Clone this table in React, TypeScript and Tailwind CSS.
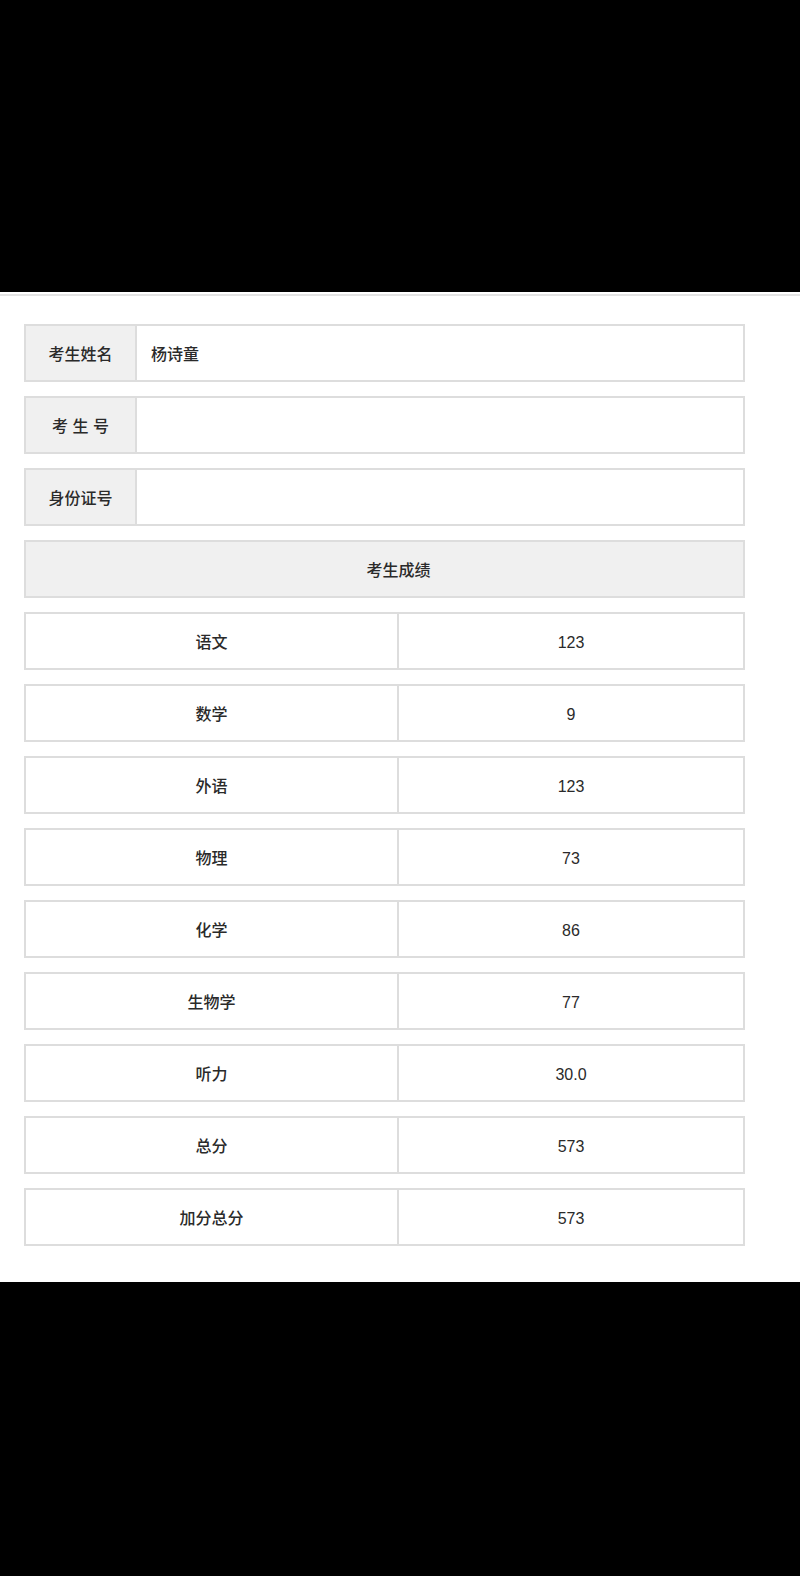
import React from "react";

const info = [
  { label: "考生姓名", value: "杨诗童" },
  { label: "考 生 号", value: "" },
  { label: "身份证号", value: "" },
];

const scores = [
  { subject: "语文", score: "123" },
  { subject: "数学", score: "9" },
  { subject: "外语", score: "123" },
  { subject: "物理", score: "73" },
  { subject: "化学", score: "86" },
  { subject: "生物学", score: "77" },
  { subject: "听力", score: "30.0" },
  { subject: "总分", score: "573" },
  { subject: "加分总分", score: "573" },
];

const App: React.FC = () => {
  return (
    <div
      className="w-[800px] h-[1576px] flex flex-col bg-black"
      style={{ fontFamily: '"Liberation Sans", "Noto Sans CJK SC", sans-serif' }}
    >
      {/* Top black area */}
      <div className="h-[292px] shrink-0 bg-black" />

      {/* Content */}
      <div className="h-[990px] shrink-0 bg-white pt-[2px]">
        <div className="h-[2px] bg-[#e4e4e4]" />
        <div className="pt-[28px] pl-[24px] flex flex-col gap-[14px] text-[16px] font-medium text-[#2a2a2a]">
          {info.map((row) => (
            <div key={row.label} className="w-[721px] h-[58px] flex border-2 border-[#dddddd]">
              <div className="w-[111px] shrink-0 bg-[#f0f0f0] border-r-2 border-[#dddddd] flex items-center justify-center pt-[3px]">
                <span className="whitespace-pre">{row.label}</span>
              </div>
              <div className="flex-1 flex items-center pl-[14px] pt-[3px]">{row.value}</div>
            </div>
          ))}

          {/* Header */}
          <div className="w-[721px] h-[58px] flex items-center justify-center border-2 border-[#dddddd] bg-[#f0f0f0] pl-[28px] pt-[3px]">
            考生成绩
          </div>

          {scores.map((row) => (
            <div key={row.subject} className="w-[721px] h-[58px] flex border-2 border-[#dddddd]">
              <div className="w-[373px] shrink-0 border-r-2 border-[#dddddd] flex items-center justify-center pt-[3px]">
                {row.subject}
              </div>
              <div className="flex-1 flex items-center justify-center pt-[3px]">{row.score}</div>
            </div>
          ))}
        </div>
      </div>

      {/* Bottom black area */}
      <div className="flex-1 bg-black" />
    </div>
  );
};

export default App;
